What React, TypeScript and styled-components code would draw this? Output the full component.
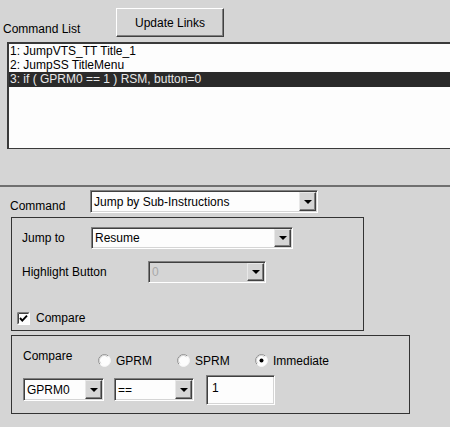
import React from "react";
import styled, { createGlobalStyle, css } from "styled-components";

const Global = createGlobalStyle`
  html, body { margin: 0; padding: 0; background: #d5d5d5; }
  body { font-family: "Liberation Sans", Arial, sans-serif; font-size: 12px; color: #000; }
  * { box-sizing: border-box; }
`;

const Page = styled.div`
  width: 450px;
  height: 427px;
  overflow: hidden;
  background: #d5d5d5;
  font-family: "Liberation Sans", Arial, sans-serif;
  font-size: 12px;
  line-height: 14px;
`;

const Header = styled.div`
  height: 42px;
  padding: 8px 0 0 3px;
  display: grid;
  grid-template-columns: 113px 108px;
  align-items: start;
`;

const Label = styled.span<{ $top?: number }>`
  display: block;
  white-space: nowrap;
  line-height: 14px;
  margin-top: ${(p) => p.$top ?? 0}px;
`;

const RaisedButton = styled.button`
  width: 108px;
  height: 29px;
  padding: 0;
  margin: 0;
  font: inherit;
  color: #000;
  background: #d5d5d5;
  border: 1px solid;
  border-color: #fff #404040 #404040 #fff;
  box-shadow: inset -1px -1px 0 #808080;
`;

const ListBox = styled.div`
  margin-left: 7px;
  width: 450px;
  height: 107px;
  background: #fdfdfd;
  border: 2px solid;
  border-color: #3a3a3a #3a3a3a #3a3a3a #3a3a3a;
  border-bottom-width: 1px;
  padding-top: 0px;
`;

const ListRow = styled.div<{ $selected?: boolean }>`
  height: 14px;
  line-height: 14px;
  padding-left: 1px;
  white-space: nowrap;
  ${(p) =>
    p.$selected &&
    css`
      background: #2a2a2a;
      color: #e8e8e8;
      height: 15px;
      line-height: 15px;
    `}
`;

const Separator = styled.div`
  margin-top: 36px;
  height: 2px;
  background: #707070;
`;

const CommandRow = styled.div`
  margin-top: 3px;
  padding-left: 10px;
  display: grid;
  grid-template-columns: 80px 228px;
  height: 23px;
`;

const ComboBox = styled.div<{ $w: number; $h?: number; $disabled?: boolean }>`
  width: ${(p) => p.$w}px;
  height: ${(p) => p.$h ?? 23}px;
  display: flex;
  align-items: stretch;
  background: ${(p) => (p.$disabled ? "#d5d5d5" : "#fdfdfd")};
  color: ${(p) => (p.$disabled ? "#a8a8a8" : "#000")};
  border: 1px solid;
  border-color: #808080 #fff #fff #808080;
  box-shadow: inset 1px 1px 0 #404040, inset -1px -1px 0 #d5d5d5;
  padding: 1px;
`;

const ComboText = styled.div`
  flex: 1;
  padding-left: 2px;
  display: flex;
  align-items: center;
  white-space: nowrap;
  overflow: hidden;
`;

const DropButton = styled.div`
  width: 17px;
  flex: none;
  background: #d5d5d5;
  border: 1px solid;
  border-color: #e8e8e8 #404040 #404040 #e8e8e8;
  box-shadow: inset -1px -1px 0 #808080;
  display: flex;
  align-items: center;
  justify-content: center;
  &::after {
    content: "";
    width: 0;
    height: 0;
    border-left: 4px solid transparent;
    border-right: 4px solid transparent;
    border-top: 4px solid #000;
  }
`;

const GroupBox = styled.div<{ $w: number; $h: number; $top: number }>`
  margin: ${(p) => p.$top}px 0 0 11px;
  width: ${(p) => p.$w}px;
  height: ${(p) => p.$h}px;
  border: 1px solid #333;
`;

const FieldRow = styled.div<{ $label: number; $top: number }>`
  display: grid;
  grid-template-columns: ${(p) => p.$label}px auto;
  align-items: center;
  padding-left: 10px;
  margin-top: ${(p) => p.$top}px;
`;

const CheckRow = styled.label`
  display: flex;
  align-items: center;
  gap: 6px;
  margin: 28px 0 0 5px;
`;

const RadioRow = styled.div`
  display: grid;
  grid-template-columns: 75px 79px 78px auto;
  align-items: start;
  padding-left: 11px;
  height: 31px;
`;

const RadioItem = styled.div`
  display: flex;
  align-items: center;
  gap: 5px;
  margin-top: 18px;
  height: 13px;
`;

const CompareRow = styled.div`
  display: flex;
  align-items: flex-start;
  margin-top: 8px;
  padding-left: 11px;
`;

const TextBox = styled.div<{ $w: number; $h: number }>`
  width: ${(p) => p.$w}px;
  height: ${(p) => p.$h}px;
  background: #fdfdfd;
  border: 1px solid;
  border-color: #808080 #fff #fff #808080;
  box-shadow: inset 1px 1px 0 #404040, inset -1px -1px 0 #d5d5d5;
  padding: 5px 0 0 5px;
  line-height: 14px;
`;

const Spacer = styled.div<{ $w: number }>`
  width: ${(p) => p.$w}px;
  flex: none;
`;

function Combo({ w, h, text, disabled }: { w: number; h?: number; text: string; disabled?: boolean }) {
  return (
    <ComboBox $w={w} $h={h} $disabled={disabled}>
      <ComboText>{text}</ComboText>
      <DropButton />
    </ComboBox>
  );
}

function Radio({ checked }: { checked?: boolean }) {
  return (
    <svg width="13" height="13" viewBox="0 0 13 13">
      <circle cx="6.5" cy="6.5" r="6" fill="#fdfdfd" />
      <path d="M1.9 10.2 A5.9 5.9 0 0 1 10.2 1.9" fill="none" stroke="#909090" strokeWidth="1" />
      <path d="M2.9 9.4 A4.6 4.6 0 0 1 9.4 2.9" fill="none" stroke="#d0d0d0" strokeWidth="1" />
      <path d="M11.1 2.8 A5.9 5.9 0 0 1 2.8 11.1" fill="none" stroke="#f4f4f4" strokeWidth="1" />
      {checked && <circle cx="6.5" cy="6.5" r="2" fill="#000" />}
    </svg>
  );
}

function CheckBox() {
  return (
    <svg width="13" height="13" viewBox="0 0 13 13">
      <rect x="0" y="0" width="13" height="13" fill="#fdfdfd" />
      <path d="M0.5 12.5 V0.5 H12.5" fill="none" stroke="#808080" />
      <path d="M1.5 11.5 V1.5 H11.5" fill="none" stroke="#404040" />
      <path d="M0.5 12.5 H12.5 V0.5" fill="none" stroke="#ffffff" />
      <polyline points="3,6 5.3,8.6 10,3.6" fill="none" stroke="#000" strokeWidth="1.9" />
    </svg>
  );
}

export default function App() {
  return (
    <Page>
      <Global />
      <Header>
        <Label $top={14}>Command List</Label>
        <RaisedButton>Update Links</RaisedButton>
      </Header>
      <ListBox>
        <ListRow>1: JumpVTS_TT Title_1</ListRow>
        <ListRow>2: JumpSS TitleMenu</ListRow>
        <ListRow $selected>3: if ( GPRM0 == 1 ) RSM, button=0</ListRow>
      </ListBox>
      <Separator />
      <CommandRow>
        <Label $top={9}>Command</Label>
        <Combo w={228} text="Jump by Sub-Instructions" />
      </CommandRow>
      <GroupBox $w={353} $h={114} $top={4}>
        <FieldRow $label={69} $top={9}>
          <Label>Jump to</Label>
          <Combo w={202} h={22} text="Resume" />
        </FieldRow>
        <FieldRow $label={126} $top={12}>
          <Label>Highlight Button</Label>
          <Combo w={118} h={22} text="0" disabled />
        </FieldRow>
        <CheckRow>
          <CheckBox />
          <span>Compare</span>
        </CheckRow>
      </GroupBox>
      <GroupBox $w={399} $h={79} $top={4}>
        <RadioRow>
          <Label $top={13}>Compare</Label>
          <RadioItem>
            <Radio />
            <span>GPRM</span>
          </RadioItem>
          <RadioItem>
            <Radio />
            <span>SPRM</span>
          </RadioItem>
          <RadioItem>
            <Radio checked />
            <span>Immediate</span>
          </RadioItem>
        </RadioRow>
        <CompareRow>
          <Spacer $w={0} />
          <div style={{ marginTop: 3 }}>
            <Combo w={81} text="GPRM0" />
          </div>
          <Spacer $w={10} />
          <div style={{ marginTop: 3 }}>
            <Combo w={80} text="==" />
          </div>
          <Spacer $w={12} />
          <TextBox $w={69} $h={30}>1</TextBox>
        </CompareRow>
      </GroupBox>
    </Page>
  );
}
